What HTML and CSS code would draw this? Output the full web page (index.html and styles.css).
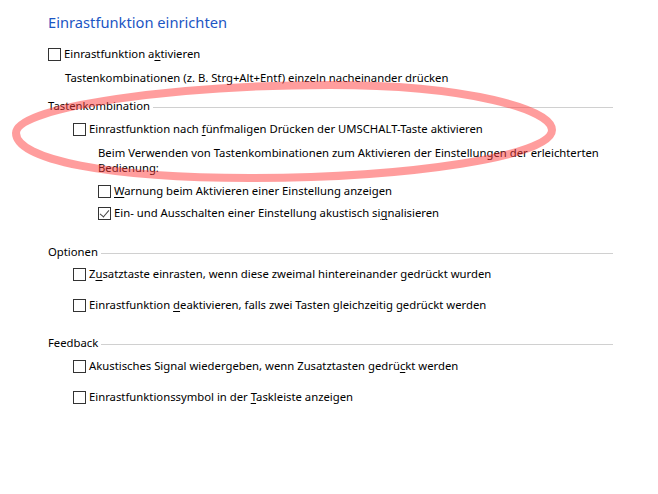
FILE: index.html
```html
<!DOCTYPE html>
<html lang="de">
<head>
  <meta charset="UTF-8">
  <title>Einrastfunktion einrichten</title>
  <link rel="stylesheet" href="styles.css">
</head>
<body>
  <div class="page">
    <h1 class="title">Einrastfunktion einrichten</h1>

    <label class="check top-check"><span class="box"></span><span>Einrastfunktion a<u>k</u>tivieren</span></label>
    <p class="hint">Tastenkombinationen (z. B. Strg+Alt+Entf) einzeln nacheinander drücken</p>

    <div class="group-head first-head"><span>Tastenkombination</span></div>
    <label class="check sub first-sub"><span class="box"></span><span>Einrastfunktion nach <u>f</u>ünfmaligen Drücken der UMSCHALT-Taste aktivieren</span></label>
    <p class="note">Beim Verwenden von Tastenkombinationen zum Aktivieren der Einstellungen der erleichterten Bedienung:</p>
    <label class="check deep note-check"><span class="box"></span><span><u>W</u>arnung beim Aktivieren einer Einstellung anzeigen</span></label>
    <label class="check deep tight"><span class="box checked"></span><span>Ein- und Ausschalten einer Einstellung akustisch si<u>g</u>nalisieren</span></label>

    <div class="group-head options-head"><span>Optionen</span></div>
    <label class="check sub tight"><span class="box"></span><span>Z<u>u</u>satztaste einrasten, wenn diese zweimal hintereinander gedrückt wurden</span></label>
    <label class="check sub wide"><span class="box"></span><span>Einrastfunktion <u>d</u>eaktivieren, falls zwei Tasten gleichzeitig gedrückt werden</span></label>

    <div class="group-head"><span>Feedback</span></div>
    <label class="check sub tight feedback-first"><span class="box"></span><span>Akustisches Signal wiedergeben, wenn Zusatztasten gedrü<u>c</u>kt werden</span></label>
    <label class="check sub wide"><span class="box"></span><span>Einrastfunktionssymbol in der <u>T</u>askleiste anzeigen</span></label>
  </div>

  <svg class="marker" width="658" height="494" viewBox="0 0 658 494">
    <path d="M16,133 C16,106 180,85 330,85 C470,85 552,110 552,130 C552,156 410,178 250,178 C110,178 16,160 16,133 Z"
          fill="none" stroke="rgba(255, 60, 60, 0.5)" stroke-width="8"/>
  </svg>
</body>
</html>
```

FILE: styles.css
```css
* {
  box-sizing: border-box;
}

body {
  margin: 0;
  background: #fff;
  color: #000;
  font-family: "Noto Sans", "Open Sans", sans-serif;
  font-size: 11.3px;
  line-height: 16px;
  position: relative;
}

.page {
  padding: 12px 0 0 48px;
  width: 613px;
}

.title {
  margin: 0;
  font-size: 14.7px;
  line-height: 20px;
  font-weight: normal;
  color: #1c56c4;
}

u {
  text-decoration-thickness: 1px;
  text-underline-offset: 2px;
}

/* checkbox rows */
.check {
  display: flex;
  align-items: center;
  gap: 3px;
  height: 16px;
  white-space: nowrap;
}

.box {
  flex: none;
  width: 13px;
  height: 13px;
  border: 1px solid #333;
  background: #fff;
  position: relative;
}

.box.checked::after {
  content: "";
  position: absolute;
  left: 3px;
  top: 0;
  width: 4px;
  height: 8px;
  border: solid #444;
  border-width: 0 1px 1px 0;
  transform: rotate(40deg);
}

.top-check {
  margin-top: 14px;
}

.hint {
  margin: 8px 0 0 17px;
}

/* section headings with a rule to the right */
.group-head {
  display: flex;
  align-items: center;
  gap: 3px;
  height: 16px;
  margin-top: 22px;
}

.group-head::after {
  content: "";
  flex: 1;
  height: 1px;
  margin-top: 2px;
  background: #d0d0d0;
}

.first-head {
  margin-top: 12px;
}

.options-head {
  margin-top: 23px;
}

.sub {
  margin-left: 25px;
}

.deep {
  margin-left: 50px;
}

.first-sub {
  margin-top: 7px;
}

.note {
  margin: 8px 0 0 50px;
  width: 505px;
  line-height: 15px;
}

.note-check {
  margin-top: 8px;
}

.tight {
  margin-top: 6px;
}

.feedback-first {
  margin-top: 7px;
}

.wide {
  margin-top: 15px;
}

.marker {
  position: absolute;
  left: 0;
  top: 0;
  pointer-events: none;
}
```
